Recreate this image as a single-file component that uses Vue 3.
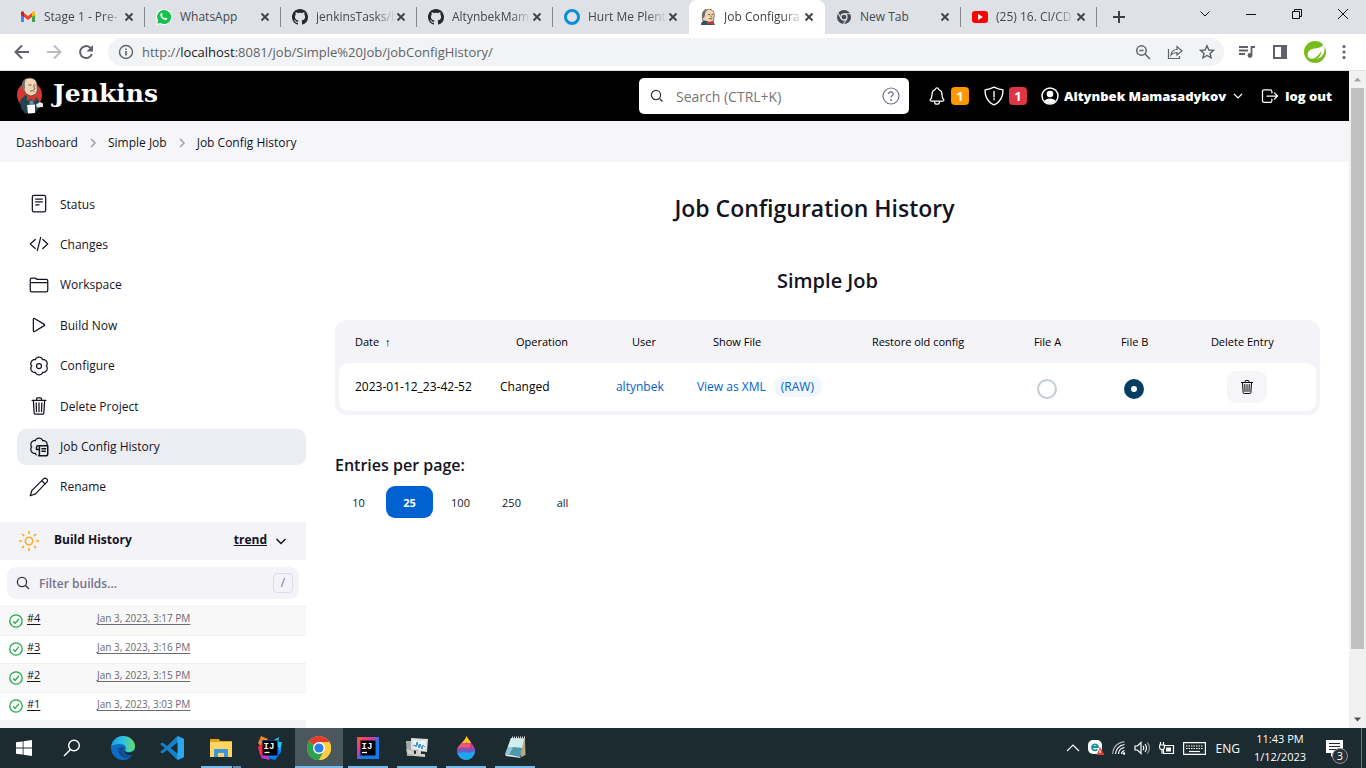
<script setup>
import { ref } from 'vue'

const tabs = [
  { icon: 'gmail', title: 'Stage 1 - Pre-' },
  { icon: 'whatsapp', title: 'WhatsApp' },
  { icon: 'github', title: 'jenkinsTasks/b' },
  { icon: 'github', title: 'AltynbekMam' },
  { icon: 'ring', title: 'Hurt Me Plent' },
  { icon: 'jenkins', title: 'Job Configura', active: true },
  { icon: 'chrome', title: 'New Tab' },
  { icon: 'youtube', title: '(25) 16. CI/CD' },
]

const menu = [
  { icon: 'status', label: 'Status' },
  { icon: 'code', label: 'Changes' },
  { icon: 'folder', label: 'Workspace' },
  { icon: 'play', label: 'Build Now' },
  { icon: 'gear', label: 'Configure' },
  { icon: 'trash', label: 'Delete Project' },
  { icon: 'history', label: 'Job Config History', active: true },
  { icon: 'pencil', label: 'Rename' },
]

const builds = [
  { id: '#4', date: 'Jan 3, 2023, 3:17 PM' },
  { id: '#3', date: 'Jan 3, 2023, 3:16 PM' },
  { id: '#2', date: 'Jan 3, 2023, 3:15 PM' },
  { id: '#1', date: 'Jan 3, 2023, 3:03 PM' },
]

const pageSizes = ['10', '25', '100', '250', 'all']
const pageSize = ref('25')

// Closed curve with six soft lobes, used for the settings glyph.
function lobes(from, to, close) {
  const points = []
  for (let a = from; a <= to; a += 5) {
    const t = (a * Math.PI) / 180
    const r = 8.7 + 1.9 * Math.pow(Math.abs(Math.cos(3 * t)), 0.7)
    points.push(`${(12 + r * Math.sin(t)).toFixed(2)} ${(12 - r * Math.cos(t)).toFixed(2)}`)
  }
  return 'M' + points.join('L') + (close ? 'Z' : '')
}
const gear = lobes(0, 355, true)
const gearOpen = lobes(200, 435, false)
const rays = [0, 45, 90, 135, 180, 225, 270, 315]
</script>

<template>
  <div class="screen">
    <header class="tabstrip">
      <div v-for="(t, i) in tabs" :key="i" class="tab" :class="{ active: t.active, plain: i === 4 }">
        <svg v-if="t.icon === 'gmail'" class="fav" viewBox="0 0 16 16"><path d="M1 4v9h3V7z" fill="#4285f4"/><path d="M15 4v9h-3V7z" fill="#34a853"/><path d="M4 4l4 3 4-3v4l-4 3-4-3z" fill="#ea4335"/><path d="M1 4c0-2 2-2 3-1v5L1 6z" fill="#c5221f"/><path d="M15 4c0-2-2-2-3-1v5l3-2z" fill="#fbbc04"/></svg>
        <svg v-else-if="t.icon === 'whatsapp'" class="fav" viewBox="0 0 16 16"><path d="M8 0a8 8 0 00-7 12L0 16l4-1A8 8 0 108 0z" fill="#fff"/><path d="M8 1a7 7 0 00-6 10.500L1.300 14.700l3.200-.8A7 7 0 108 1z" fill="#12c24a"/><path d="M5 4.200c.6-.4 1-.2 1.200.3l.5 1.200c0 .4-.5.7-.7 1 .6 1.200 1.500 2 2.800 2.500.4-.3.700-.9 1.100-.8l1.500.8c.2 1.200-.9 1.800-1.800 1.700-2.700-.3-5.200-2.800-5.300-5 0-.7.300-1.300.7-1.700z" fill="#fff"/></svg>
        <svg v-else-if="t.icon === 'github'" class="fav" viewBox="0 0 16 16"><path fill="#24292f" d="M8 0C3.580 0 0 3.580 0 8c0 3.540 2.290 6.530 5.470 7.590.4.070.55-.17.55-.38 0-.19-.01-.82-.01-1.490-2.010.37-2.530-.49-2.690-.94-.09-.23-.48-.94-.82-1.130-.28-.15-.68-.52-.01-.53.63-.01 1.080.58 1.230.82.72 1.210 1.870.87 2.330.66.07-.52.28-.87.51-1.070-1.780-.2-3.640-.89-3.640-3.950 0-.87.31-1.590.82-2.150-.08-.2-.36-1.020.08-2.120 0 0 .67-.21 2.200.82.64-.18 1.320-.27 2-.27.68 0 1.360.09 2 .27 1.530-1.040 2.200-.82 2.200-.82.44 1.100.16 1.920.08 2.120.51.56.82 1.270.82 2.150 0 3.070-1.870 3.750-3.650 3.950.29.25.54.73.54 1.480 0 1.070-.01 1.930-.01 2.200 0 .21.15.46.55.38A8.013 8.013 0 0016 8c0-4.420-3.580-8-8-8z"/></svg>
        <svg v-else-if="t.icon === 'ring'" class="fav" viewBox="0 0 16 16"><circle cx="8" cy="8" r="6.500" fill="none" stroke="#0b8fd3" stroke-width="3"/></svg>
        <svg v-else-if="t.icon === 'jenkins'" class="fav" viewBox="0 0 16 16"><path d="M3 12C1 5 3 0 8 0s7 4 6 8l-1 5-5 1z" fill="#f0d6b7" stroke="#4a3b35" stroke-width=".7"/><path d="M3 9C1 4 4 0 9 .5 6 1 5 3 5 6L4 9z" fill="#6d6b6d"/><path d="M8 5.500h2M11.500 5.500h1.500M9 9.500l3 .5M10.500 6.500l1.500 2" stroke="#4a3b35" stroke-width=".8" fill="none"/><path d="M1 16c0-3 2-4.500 4-4.500l4 1.500 4-1 2 4z" fill="#335061"/><path d="M7 12l3 1.500 3-1.500v4l-3-1.500L7 16z" fill="#d33833"/></svg>
        <svg v-else-if="t.icon === 'chrome'" class="fav" viewBox="0 0 16 16"><circle cx="8" cy="8" r="7" fill="#474b50"/><circle cx="8" cy="8" r="3" fill="#474b50" stroke="#dee1e6" stroke-width="1.300"/><path d="M8 4.700h6.500M5.200 9.700L2 4M10.800 9.700L7.500 15" stroke="#dee1e6" stroke-width="1.100"/></svg>
        <svg v-else class="fav" viewBox="0 0 16 16"><rect y="2" width="16" height="12" rx="3" fill="#f00"/><path d="M6 5v6l5-3z" fill="#fff"/></svg>
        <span class="tab-title" :class="{ faded: t.title.length > 8 }">{{ t.title }}</span>
        <button class="tab-close" :aria-label="'Close ' + t.title"><svg width="10" height="10" viewBox="0 0 10 10"><path d="M1.500 1.500l7 7M8.500 1.500l-7 7" stroke="#3c4043" stroke-width="1.800"/></svg></button>
      </div>
      <button class="newtab" aria-label="New tab"><svg width="14" height="14" viewBox="0 0 14 14"><path d="M7 1v12M1 7h12" stroke="#3c4043" stroke-width="2"/></svg></button>
      <div class="wincontrols">
        <button aria-label="Search tabs"><svg viewBox="0 0 12 12"><path d="M1.500 3.500L6 8l4.500-4.500"/></svg></button>
        <button aria-label="Minimize"><svg viewBox="0 0 12 12"><path d="M1 6.500h10"/></svg></button>
        <button aria-label="Restore"><svg viewBox="0 0 12 12"><path d="M1.500 3.500h7v7h-7zM3.500 3.500v-2h7v7h-2"/></svg></button>
        <button aria-label="Close window"><svg viewBox="0 0 12 12"><path d="M1 1l10 10M11 1L1 11"/></svg></button>
      </div>
    </header>

    <div class="toolbar">
      <button class="tool" aria-label="Back"><svg width="16" height="16" viewBox="0 0 16 16"><path d="M15 8H2M8 1.500L1.500 8 8 14.500" fill="none" stroke="#5f6368" stroke-width="2"/></svg></button>
      <button class="tool" aria-label="Forward"><svg width="16" height="16" viewBox="0 0 16 16"><path d="M1 8h13M8 1.500L14.500 8 8 14.500" fill="none" stroke="#babcbe" stroke-width="2"/></svg></button>
      <button class="tool" aria-label="Reload"><svg width="16" height="16" viewBox="0 0 16 16"><path d="M13.800 10A6 6 0 1112 3.500L14 5.500" fill="none" stroke="#5f6368" stroke-width="2"/><path d="M15 1v6.500H8.500z" fill="#5f6368"/></svg></button>
      <div class="omnibox">
        <svg width="16" height="16" viewBox="0 0 16 16"><circle cx="8" cy="8" r="6.500" fill="none" stroke="#5f6368" stroke-width="1.400"/><path d="M8 7v4.500M8 4.500V6" stroke="#5f6368" stroke-width="1.600"/></svg>
        <a class="url" href="#">http://<b>localhost</b>:8081/job/Simple%20Job/jobConfigHistory/</a>
        <button class="tool" aria-label="Zoom"><svg width="16" height="16" viewBox="0 0 16 16" fill="none" stroke="#5f6368" stroke-width="1.500"><circle cx="6.500" cy="6.500" r="4.700"/><path d="M10 10l5 5M4.500 6.500h4"/></svg></button>
        <button class="tool" aria-label="Share"><svg width="16" height="16" viewBox="0 0 16 16" fill="none" stroke="#5f6368" stroke-width="1.200"><path d="M1.500 5v9.500h11V12M4 11c.5-4 3-5.500 6-5.500V2.500l5 4.500-5 4V8.500c-3 0-4.500.5-6 2.500z"/></svg></button>
        <button class="tool" aria-label="Bookmark"><svg width="16" height="16" viewBox="0 0 16 16"><path d="M8 1.800l1.900 4.200 4.600.4-3.500 3 1.100 4.500L8 11.500l-4.100 2.400L5 9.400l-3.500-3L6.100 6z" fill="none" stroke="#5f6368" stroke-width="1.400"/></svg></button>
      </div>
      <button class="tool" aria-label="Media"><svg width="18" height="16" viewBox="0 0 18 16"><path d="M1 3h9M1 6.500h9M1 10h6M13.500 11V3H17" fill="none" stroke="#5f6368" stroke-width="1.800"/><circle cx="12" cy="11.500" r="2.400" fill="#5f6368"/></svg></button>
      <button class="tool" aria-label="Side panel"><svg width="16" height="16" viewBox="0 0 16 16"><path d="M2 2h12v12H2z" fill="none" stroke="#5f6368" stroke-width="2"/><path d="M9 1h6v14H9z" fill="#5f6368"/></svg></button>
      <button class="tool" aria-label="Profile"><svg width="22" height="22" viewBox="0 0 22 22"><circle cx="11" cy="11" r="11" fill="#77bc1f"/><path d="M20 3c1.500 6 .5 13-6.500 14.500-4 .8-7.500.5-9.500-1.500C2.500 11 6 8 11 7.500c4-.4 7-1.500 9-4.500z" fill="#fff"/><path d="M3 18.500c6 .5 11.500-3 14.500-9 0 5-4 9.500-10 9.500z" fill="#77bc1f"/></svg></button>
      <button class="tool" aria-label="Menu"><svg width="4" height="16" viewBox="0 0 4 16" fill="#5f6368"><circle cx="2" cy="2.500" r="1.600"/><circle cx="2" cy="8" r="1.600"/><circle cx="2" cy="13.500" r="1.600"/></svg></button>
    </div>

    <div class="viewport">
      <div class="page">
        <div class="topbar">
          <a class="brand" href="#">
            <svg width="28" height="38" viewBox="0 0 28 38"><ellipse cx="13.500" cy="18" rx="12.500" ry="13" fill="#d33833"/><path d="M4 24l5-6 6 3 5-1 3 4 1 6-5 6-10 .5-4-5.500z" fill="#24424f"/><path d="M7 11C5 4 9 1 14 1s7.500 4 7 8c.8 3.500.5 6.500-2 8.500l-4 1.500-5-2z" fill="#f0d6b7" stroke="#3b2c26" stroke-width=".6"/><path d="M7 13C5 9 5.500 4 10 1.800 8.500 4.500 8.800 8 9 11l-1 3z" fill="#77726f"/><path d="M12.500 8h3M17.500 8h2M14 14.500c1.500-1 3-1 4.500 0M17.500 9l1.500 3-1.500.5" stroke="#49372e" stroke-width=".8" fill="none"/><path d="M11 18.500l4 2 4.500-2v5.500l-4.500-2-4 2z" fill="#d33833"/><path d="M13.500 23.500h4v4h-4z" fill="#6f8f9e"/><path d="M11 28l8-.5v8.500l-7 .5z" fill="#fff"/><path d="M20 27.500l4-2.500 3 1.500v3.500l-6 .5z" fill="#e9e6e2"/></svg>
            <span>Jenkins</span>
          </a>
          <div class="searchbox">
            <svg width="14" height="14" viewBox="0 0 14 14"><circle cx="6" cy="6" r="4.600" fill="none" stroke="#333" stroke-width="1.200"/><path d="M9.500 9.500L12.500 12.500" stroke="#333" stroke-width="1.300"/></svg>
            <input type="text" placeholder="Search (CTRL+K)" aria-label="Search" />
            <a href="#" aria-label="Search help"><svg width="18" height="18" viewBox="0 0 18 18"><circle cx="9" cy="9" r="8" fill="none" stroke="#73738c" stroke-width="1.200"/><path d="M6.500 7c.2-3 5-2.800 4.700 0-.2 1.500-2.200 1.500-2.200 3.500" fill="none" stroke="#73738c" stroke-width="1.300"/><circle cx="9" cy="13" r="1" fill="#73738c"/></svg></a>
          </div>
          <a class="notice" href="#" aria-label="Notifications"><svg width="20" height="20" viewBox="0 0 512 512"><path class="line" d="M427.680 351.430C402 320 383.870 304 383.870 217.350 383.870 138 343.350 109.730 310 96c-4.430-1.820-8.600-6-9.950-10.550C294.200 65.540 277.800 48 256 48s-38.210 17.550-44 37.470c-1.350 4.600-5.520 8.710-9.950 10.530-33.390 13.750-73.870 41.920-73.870 121.350C128.130 304 110 320 84.320 351.430 73.680 364.450 83 384 101.610 384h308.880c18.510 0 27.770-19.610 17.190-32.570zM320 384v16a64 64 0 01-128 0v-16"/></svg><span class="badge orange">1</span></a>
          <a class="notice" href="#" aria-label="Security warnings"><svg width="22" height="22" viewBox="0 0 512 512"><path class="line" d="M463.100 112.370C373.680 96.330 336.710 84.450 256 48c-80.710 36.450-117.680 48.330-207.100 64.370C32.700 369.130 240.580 457.790 256 464c15.420-6.210 223.300-94.870 207.100-351.630zM256 150v130M256 320v26"/></svg><span class="badge red">1</span></a>
          <a class="user" href="#"><svg width="18" height="18" viewBox="0 0 18 18"><circle cx="9" cy="9" r="8" fill="none" stroke="#fff" stroke-width="1.500"/><circle cx="9" cy="7" r="3.300" fill="#fff"/><path d="M3.500 14c1-3.500 10-3.500 11 0-2 3-9 3-11 0z" fill="#fff"/></svg><span>Altynbek Mamasadykov</span></a>
          <button class="caret" aria-label="User menu"><svg width="10" height="10" viewBox="0 0 10 10"><path d="M1 3l4 4 4-4" fill="none" stroke="#fff" stroke-width="1.200"/></svg></button>
          <a class="user logout" href="#"><svg width="20" height="20" viewBox="0 0 512 512"><path class="line" d="M304 336v40a40 40 0 01-40 40H104a40 40 0 01-40-40V136a40 40 0 0140-40h152c22.090 0 48 17.910 48 40v40M368 336l80-80-80-80M176 256h256"/></svg><span>log out</span></a>
        </div>

        <nav class="crumbs" aria-label="Breadcrumb">
          <a href="#">Dashboard</a>
          <svg width="8" height="10" viewBox="0 0 8 10"><path d="M2 1l4 4-4 4"/></svg>
          <a href="#">Simple Job</a>
          <svg width="8" height="10" viewBox="0 0 8 10"><path d="M2 1l4 4-4 4"/></svg>
          <a href="#">Job Config History</a>
        </nav>

        <div class="body">
          <aside class="side">
            <nav class="tasks" aria-label="Job">
              <a v-for="m in menu" :key="m.label" href="#" :class="{ current: m.active }">
                <svg v-if="m.icon === 'status'" viewBox="0 0 24 24"><rect x="4" y="1.500" width="16" height="20" rx="2"/><path d="M8 6h8M8 9.500h8M8 13h4"/></svg>
                <svg v-else-if="m.icon === 'code'" viewBox="0 0 24 24"><path d="M7.500 6.500L1.500 12l6 5.500M16.500 6.500l6 5.500-6 5.500M14 4l-4 16"/></svg>
                <svg v-else-if="m.icon === 'folder'" viewBox="0 0 512 512"><path class="line" d="M440 432H72a40 40 0 01-40-40V120a40 40 0 0140-40h75.890a40 40 0 0122.190 6.720l27.840 18.560a40 40 0 0022.190 6.720H440a40 40 0 0140 40v240a40 40 0 01-40 40zM32 192h448"/></svg>
                <svg v-else-if="m.icon === 'play'" viewBox="0 0 512 512"><path class="line" d="M112 111v290c0 17.440 17 28.520 31 20.160l247.900-148.370c12.120-7.250 12.120-26.330 0-33.580L143 90.840c-14-8.360-31 2.720-31 20.160z"/></svg>
                <svg v-else-if="m.icon === 'gear'" viewBox="0 0 24 24"><path :d="gear"/><circle cx="12" cy="12" r="3"/></svg>
                <svg v-else-if="m.icon === 'trash'" viewBox="0 0 512 512"><path class="line" d="M112 112l20 320c.95 18.490 14.400 32 32 32h184c17.670 0 30.870-13.510 32-32l20-320M80 112h352M192 112V72a24 24 0 0124-24h80a24 24 0 0124 24v40M256 176v224M184 176l8 224M328 176l-8 224"/></svg>
                <svg v-else-if="m.icon === 'history'" viewBox="0 0 24 24"><path :d="gearOpen"/><path d="M11.500 22.500H20a2.500 2.500 0 002.500-2.500v-9.500H11a2 2 0 00-2 2v2.500h3.500v5.500a2 2 0 01-1 2M12.500 11v4M15.500 14h4.500M15.500 17h4" stroke-width="1.800"/></svg>
                <svg v-else viewBox="0 0 24 24"><path d="M1.500 22.500l2-6.500L17.500 2.300a2.500 2.500 0 013.800 0 2.500 2.500 0 010 3.900L7.800 20.200zM15.500 4.500l4 4"/></svg>
                <span>{{ m.label }}</span>
              </a>
            </nav>

            <section class="history">
              <div class="history-head">
                <svg width="20" height="20" viewBox="0 0 20 20" fill="none" stroke="#fbab2a" stroke-width="1.600"><circle cx="10" cy="10" r="3.700"/><path v-for="r in rays" :key="r" d="M10 0v3" :transform="`rotate(${r} 10 10)`"/></svg>
                <h2>Build History</h2>
                <a href="#">trend</a>
                <button aria-label="Collapse build history"><svg width="12" height="12" viewBox="0 0 12 12"><path d="M1.500 4L6 8.500 10.500 4" fill="none" stroke="#14141f" stroke-width="1.500"/></svg></button>
              </div>
              <div class="filter">
                <svg width="14" height="14" viewBox="0 0 14 14"><circle cx="6" cy="6" r="4.600" fill="none" stroke="#333" stroke-width="1.300"/><path d="M9.500 9.500L13 13" stroke="#333" stroke-width="1.300"/></svg>
                <input type="text" placeholder="Filter builds..." aria-label="Filter builds" />
                <kbd>/</kbd>
              </div>
              <ul class="builds">
                <li v-for="b in builds" :key="b.id">
                  <svg width="14" height="14" viewBox="0 0 14 14" fill="none" stroke="#1ea64b" stroke-width="1.300"><circle cx="7" cy="7" r="6.200"/><path d="M4.200 7.500l2 1.800 3.600-4.500"/></svg>
                  <a class="num" href="#">{{ b.id }}</a>
                  <a class="when" href="#">{{ b.date }}</a>
                </li>
              </ul>
            </section>
          </aside>

          <main class="main">
            <h1>Job Configuration History</h1>
            <h2 class="job">Simple Job</h2>
            <div class="tablewrap">
              <table>
                <colgroup><col class="c1" /><col class="c2" /><col class="c3" /><col class="c4" /><col class="c5" /><col class="c6" /><col class="c7" /><col class="c8" /></colgroup>
                <thead>
                  <tr><th>Date&nbsp; ↑</th><th>Operation</th><th>User</th><th>Show File</th><th>Restore old config</th><th>File A</th><th>File B</th><th>Delete Entry</th></tr>
                </thead>
                <tbody>
                  <tr>
                    <td>2023-01-12_23-42-52</td>
                    <td>Changed</td>
                    <td><a href="#">altynbek</a></td>
                    <td><a href="#">View as XML</a><a class="raw" href="#">(RAW)</a></td>
                    <td></td>
                    <td class="pick"><input type="radio" name="fileA" aria-label="File A" /></td>
                    <td class="pick"><input type="radio" name="fileB" aria-label="File B" checked /></td>
                    <td class="mid"><button class="del" aria-label="Delete entry"><svg width="16" height="16" viewBox="0 0 512 512"><path class="line" d="M112 112l20 320c.95 18.490 14.400 32 32 32h184c17.670 0 30.870-13.510 32-32l20-320M80 112h352M192 112V72a24 24 0 0124-24h80a24 24 0 0124 24v40M256 176v224M184 176l8 224M328 176l-8 224"/></svg></button></td>
                  </tr>
                </tbody>
              </table>
            </div>
            <h3>Entries per page:</h3>
            <div class="sizes">
              <button v-for="s in pageSizes" :key="s" :class="{ on: s === pageSize }" @click="pageSize = s">{{ s }}</button>
            </div>
          </main>
        </div>
      </div>
      <div class="scrollbar">
        <svg width="17" height="17" viewBox="0 0 17 17"><path d="M5 10.500l3.500-4 3.500 4z" fill="#a3a3a3"/></svg>
        <div class="track"><div class="thumb"></div></div>
        <svg width="17" height="17" viewBox="0 0 17 17"><path d="M5 6.500l3.500 4 3.500-4z" fill="#505050"/></svg>
      </div>
    </div>

    <footer class="taskbar">
      <button class="app first" aria-label="Start"><svg width="16" height="16" viewBox="0 0 16 16" fill="#fff"><path d="M0 2.300L6.700 1.400v6.200H0zM7.500 1.300L16 0v7.600H7.500zM0 8.400h6.700v6.200L0 13.700zM7.500 8.400H16V16l-8.500-1.300z"/></svg></button>
      <button class="app second" aria-label="Search"><svg width="18" height="18" viewBox="0 0 18 18" fill="none" stroke="#fff" stroke-width="1.400"><circle cx="11" cy="6.500" r="5.300"/><path d="M7.500 10.500L1 17"/></svg></button>
      <button class="app" aria-label="Edge"><svg width="24" height="24" viewBox="0 0 24 24"><defs><linearGradient id="eg" x1="0" x2="1"><stop offset="0" stop-color="#199de3"/><stop offset=".55" stop-color="#32c5dc"/><stop offset="1" stop-color="#6bdc5a"/></linearGradient></defs><circle cx="12" cy="12" r="12" fill="#0b6cc4"/><path d="M.2 11C1 4 6 0 12 0c7 0 12 5 12 10 0 4-3 6-6.500 6-3 0-3.800-1.200-3-2.500 1.500-2-.5-5.500-5-5.500C5 8 1 9 .2 11z" fill="url(#eg)"/><path d="M7.500 13c-1 6 4 9 8 9 3 0 5.500-1.500 7-3.500-4 2-8 1-9.500-1.500-1.500-2-.5-4 .5-4.500-1-2-5-2-6 .5z" fill="#124c8d"/><path d="M14.500 14c-1 1.500.5 2.500 3 2.500 3 0 6-1.500 6.500-4.500 0 4-1 6.500-2 7-4 1-7.500-.5-8.500-2.500-.5-1 0-2 1-2.500z" fill="#1b2b32"/></svg></button>
      <button class="app" aria-label="Code"><svg width="24" height="24" viewBox="0 0 24 24"><path d="M17.500 0L24 3v18l-6.500 3L7 14l-4.500 3.500L0 16l5-4-5-4 2.500-1.500L7 10z" fill="#1583cc"/><path d="M17.500 0L24 3v18l-6.500 3z" fill="#2ba7f0"/><path d="M17.500 6.500v11L10.500 12z" fill="#1b2b32"/></svg></button>
      <button class="app open wide" aria-label="Files"><svg width="22" height="20" viewBox="0 0 22 20"><path d="M0 1h9l1 2h12v16H0z" fill="#e8a20c"/><path d="M0 4h22v15H0z" fill="#ffd563"/><path d="M4 11h14v8h-4v-4H8v4H4z" fill="#3d95dd"/></svg></button>
      <button class="app" aria-label="IntelliJ IDEA"><svg width="24" height="24" viewBox="0 0 24 24"><path d="M3 0l7 3-5 10-5-6z" fill="#fc801d"/><path d="M4 4l16 0 3 4v8l-6 8-8-2-6-6z" fill="#087cfa"/><path d="M0 11l6-5 5 18-9-5z" fill="#fe2857"/><path d="M16 4l5-3-1 5 4 0-2 9-4-9z" fill="#21c7f4"/><path d="M4 16l8 8-9-2z" fill="#d731ce"/><rect x="4.500" y="4.500" width="15" height="15"/><text x="5.500" y="12.500" class="ij">IJ</text><path d="M6.500 16.500h5" stroke="#fff" stroke-width="1.300"/></svg></button>
      <button class="app open current" aria-label="Chrome"><svg width="24" height="24" viewBox="0 0 24 24"><circle cx="12" cy="12" r="12" fill="#ffcd40"/><path d="M12 12L1.600 6a12 12 0 0120.800 0z" fill="#e33b2e"/><path d="M12 12l-10.400-6A12 12 0 0012 24l5.200-9z" fill="#2ba24c"/><path d="M12 6h10.400A12 12 0 0112 24l5.200-9z" fill="#ffcd40"/><circle cx="12" cy="12" r="6" fill="#fff"/><circle cx="12" cy="12" r="4.600" fill="#2f7be8"/></svg></button>
      <button class="app open" aria-label="IntelliJ"><svg width="22" height="22" viewBox="0 0 22 22"><defs><linearGradient id="ig" x1="0" y1="0" x2="1" y2="1"><stop offset="0" stop-color="#fc5a1d"/><stop offset=".35" stop-color="#d43aa5"/><stop offset=".6" stop-color="#1677ed"/></linearGradient></defs><rect width="22" height="22" fill="url(#ig)"/><rect x="3.500" y="3.500" width="15" height="15"/><text x="4.500" y="11.500" class="ij">IJ</text><path d="M5 15.500h5" stroke="#fff" stroke-width="1.300"/></svg></button>
      <button class="app open" aria-label="Monitor"><svg width="24" height="22" viewBox="0 0 24 22"><path d="M1 4h8v15H2z" fill="#aaa"/><path d="M6 1l17 1-1 13-16-2z" fill="#ddd"/><path d="M8 3l13 1-1 9-12-2z" fill="#eef5fa"/><path d="M8 9l2-1 1 2 1-5 2 6 1-4 2 5 1-4 2 2" fill="none" stroke="#2b85c4"/><path d="M11 14h5v3h4v3l-11-1v-2h2zM1 12l7 2 2 4-7-1z" fill="#cfcfcf"/></svg></button>
      <button class="app open" aria-label="Paint"><svg width="18" height="24" viewBox="0 0 18 24"><defs><clipPath id="drop"><path d="M9.500 0c2 5 8.500 9 8.500 15a9 9 0 01-18 0C0 9 8 6 9.500 0z"/></clipPath></defs><g clip-path="url(#drop)"><path d="M0 0h18v24H0z" fill="#cb3a8b"/><path d="M5 0h9v7c-3 0-4-1-9 1z" fill="#fcc81a"/><path d="M0 8c6-3 8 1 13-1v4c-5 2-8-1-13 2z" fill="#f0567c"/><path d="M0 14c7-4 10 1 18-2v4c-7 3-11-1-18 3z" fill="#6c5cc8"/><path d="M0 18c7-4 11 1 18-3v9H0z" fill="#18a8f0"/></g></svg></button>
      <button class="app open" aria-label="Notepad"><svg width="24" height="24" viewBox="0 0 24 24"><path d="M9 2h13l.5 17-4 2z" fill="#b9a781"/><path d="M8 2l13 1-4 18-15-3z" fill="#8fc5d2"/><path d="M8 2l13 1-2 9-14-1z" fill="#cfeef0"/><path d="M10 11l9 1-2 9-11-2z" fill="#4e98a8"/><path d="M2 18l15 3 1 1-15-2z" fill="#eee"/><path d="M9 1.500h13" stroke="#ddd" stroke-dasharray="1 1" stroke-width="2"/></svg></button>
      <div class="tray">
        <svg width="14" height="14" viewBox="0 0 14 14"><path d="M1 10l6-6 6 6"/></svg>
        <svg width="16" height="16" viewBox="0 0 16 16"><rect x="0" y="0" width="14" height="14" rx="5" fill="#fff" stroke="none"/><path d="M3.500 7h6.500a3 3 0 10-.8 2.400" stroke="#0f9199" stroke-width="1.800"/><path d="M12 7l4.500 8h-8z" fill="#e33b3b" stroke="none"/><path d="M12 10v3"/></svg>
        <svg width="14" height="14" viewBox="0 0 14 14"><path d="M9.500 13a4 4 0 013-3.500M6.500 13a7 7 0 016-6.500M3.500 13a10 10 0 019-9.500" /><path d="M.8 13A12 12 0 0112.500.8" stroke="#aab2b5"/><circle cx="12" cy="12.500" r="1.200" fill="#fff" stroke="none"/></svg>
        <svg width="17" height="14" viewBox="0 0 17 14"><path d="M1 5h2.500L7 1.500v11L3.500 9H1zM9 5c1 1 1 3 0 4M11 3.200c2 2 2 5.600 0 7.600"/><path d="M13.200 1.500c3 3 3 8 0 11" stroke="#87949a"/></svg>
        <svg width="16" height="14" viewBox="0 0 16 14"><path d="M5 4.500h9.500v8H4.500v-4M1.500 1v3M4.500 1v3M.5 4h5v2a2 2 0 01-5 0zM3 8v4.500"/><path d="M7 6.500h5v4H7z" fill="#fff" stroke="none"/></svg>
        <svg width="23" height="13" viewBox="0 0 23 13"><path d="M.6.6h21.800v11.800H.6z"/><path d="M3 4h17M3 6.500h17" stroke-dasharray="1.500 1"/><path d="M6 9.500h11"/></svg>
        <span class="lang">ENG</span>
        <div class="clock"><span>11:43 PM</span><span>1/12/2023</span></div>
        <button class="action" aria-label="Notifications"><svg width="18" height="17" viewBox="0 0 18 17"><path d="M0 0h17v13H9l-4 4v-4H0z" fill="#fff" stroke="none"/><path d="M3 3.500h11M3 6.500h11M3 9.500h7" stroke="#1b2b32"/></svg><span>3</span></button>
      </div>
    </footer>
  </div>
</template>

<style>
body { margin: 0; }
</style>

<style scoped>
* { box-sizing: border-box; }
.screen { min-height: 100vh; display: flex; flex-direction: column; font-family: "Segoe UI", "Open Sans", "Noto Sans", sans-serif; font-size: 12px; color: #14141f; background: #fff; }
button { border: 0; background: none; padding: 0; margin: 0; font: inherit; color: inherit; display: flex; align-items: center; justify-content: center; }
a { color: inherit; text-decoration: none; }
svg { flex: none; display: block; }
h1, h2, h3, ul { margin: 0; padding: 0; }
.line { fill: none; stroke: currentColor; stroke-width: 32; stroke-linecap: round; stroke-linejoin: round; }

.tabstrip { height: 34px; display: flex; background: #dee1e6; padding-left: 9px; }
.tab { flex: 0 1 136px; min-width: 0; display: flex; align-items: center; padding: 0 10px 0 11px; position: relative; color: #45494d; }
.tab::after { content: ""; position: absolute; right: 0; top: 7px; width: 1px; height: 20px; background: #85888c; }
.tab.active::after, .tab.plain::after { display: none; }
.tab.active { background: #fff; border-radius: 8px 8px 0 0; color: #3c4043; }
.fav { width: 16px; height: 16px; }
.tab-title { flex: 1; min-width: 0; margin-left: 8px; white-space: nowrap; line-height: 18px; }
.tab-title.faded { mask-image: linear-gradient(to right, #000 75%, transparent 100%); }
.tab-close { width: 12px; height: 16px; flex: none; }
.newtab { width: 28px; margin-left: 8px; }
.wincontrols { margin-left: auto; display: flex; height: 28px; }
.wincontrols button { width: 46px; }
.wincontrols svg { width: 12px; height: 12px; fill: none; stroke: #111; stroke-width: 1; }

.toolbar { height: 37px; display: flex; align-items: center; gap: 16px; padding: 0 20px 0 14px; border-bottom: 1px solid #dfe1e5; }
.toolbar .tool { min-width: 4px; flex: none; }
.omnibox { flex: 1; height: 28px; margin: 0 -2px; border-radius: 14px; background: #f1f3f4; display: flex; align-items: center; gap: 16px; padding: 0 9px 0 10px; }
.url { flex: 1; font-size: 13px; line-height: 20px; color: #5f6368; margin-left: -8px; white-space: nowrap; overflow: hidden; }
.url b { font-weight: 400; color: #202124; }

.viewport { flex: 1; display: flex; }
.page { flex: 1; min-width: 0; display: flex; flex-direction: column; }
.topbar { height: 50px; background: #000; color: #fff; display: flex; align-items: center; padding: 0 17px 0 16px; }
.brand { display: flex; align-items: center; gap: 9px; margin-right: auto; font: bold 25px/32px "DejaVu Serif", serif; }
.brand span { padding-bottom: 4px; }
.searchbox { width: 270px; height: 36px; border-radius: 5px; background: #fff; display: flex; align-items: center; padding: 0 9px 0 11px; gap: 12px; margin-right: 18px; }
input[type="text"] { border: 0; background: none; padding: 0; flex: 1; min-width: 0; font: inherit; outline: none; }
.searchbox input { font-size: 14px; }
.searchbox input::placeholder { color: #757575; opacity: 1; }
.notice { display: flex; align-items: center; gap: 4px; margin-right: 14px; }
.badge { width: 18px; height: 18px; border-radius: 4px; font-weight: 700; font-size: 13px; line-height: 18px; text-align: center; }
.orange { background: #ff9800; }
.red { background: #dc3545; }
.user { display: flex; align-items: center; gap: 5px; font-size: 13px; font-weight: 800; white-space: nowrap; }
.user.logout { gap: 5px; }
.caret { width: 16px; margin: 0 14px 0 4px; }

.crumbs { height: 41px; background: #f6f6f9; display: flex; align-items: center; gap: 11px; padding: 2px 16px 0; }
.crumbs svg { fill: none; stroke: #a0a0b0; stroke-width: 1.500; }
.body { flex: 1; display: flex; }
.side { width: 306px; flex: none; display: flex; flex-direction: column; padding-top: 24px; }
.tasks { min-height: 319px; display: flex; flex-direction: column; justify-content: space-between; padding-left: 17px; }
.tasks a { height: 36px; border-radius: 9px; display: flex; align-items: center; gap: 11px; padding-left: 12px; }
.tasks a.current { background: #ecedf2; }
.tasks svg { width: 20px; height: 20px; fill: none; stroke: currentColor; stroke-width: 1.500; stroke-linejoin: round; stroke-linecap: round; }
.history { flex: 1; margin-top: 17px; display: flex; flex-direction: column; border-bottom: 8px solid #f3f3f8; }
.history-head { height: 38px; background: #f3f3f8; display: flex; align-items: center; padding: 0 19px; }
.history-head h2, .history-head a { font-size: 12px; font-weight: 700; line-height: 18px; padding-bottom: 2px; }
.history-head h2 { margin: 0 auto 0 15px; }
.history-head a { text-decoration: underline; margin-right: 8px; }
.filter { margin: 7px 7px; height: 32px; border-radius: 9px; background: #f3f3f8; display: flex; align-items: center; padding: 0 6px 0 9px; gap: 9px; color: #73738c; }
.filter input { font-weight: 600; }
.filter input::placeholder { color: #73738c; opacity: 1; }
kbd { width: 20px; height: 20px; border: 1px solid #dcdce8; border-radius: 4px; font: inherit; line-height: 18px; text-align: center; }
.builds { flex: 1; list-style: none; display: grid; grid-auto-rows: 1fr; font-size: 10px; }
.builds li { display: flex; align-items: center; border-top: 1px solid #f0f0f0; padding: 0 9px; }
.builds li:nth-child(odd) { background: #f8f8f8; }
.builds a { text-decoration: underline; text-underline-offset: 2px; line-height: 14px; padding-bottom: 5px; }
.num { width: 70px; margin-left: 4px; font-size: 11px; }
.when { color: #6b6b75; }

.main { flex: 1; min-width: 0; padding: 29px 29px 0; }
h1 { text-align: center; font-size: 23px; line-height: 34px; font-weight: 600; padding-right: 26px; }
.job { text-align: center; font-size: 20px; line-height: 28px; font-weight: 600; margin-top: 42px; }
.tablewrap { margin-top: 25px; border: 4px solid #f3f3f8; border-top: 0; border-radius: 12px; background: #f3f3f8; }
table { width: 100%; border-collapse: separate; border-spacing: 0; table-layout: fixed; color: #000; }
.c1 { width: 14.840%; } .c2 { width: 11.870%; } .c3 { width: 8.290%; } .c4 { width: 16.270%; }
.c5 { width: 16.580%; } .c6 { width: 8.910%; } .c7 { width: 9.210%; } .c8 { width: 14.030%; }
th { height: 43px; padding: 0 0 0 32px; text-align: left; font-weight: 400; font-size: 11px; white-space: nowrap; }
th:first-child { padding-left: 16px; }
td { height: 48px; padding: 0 0 2px 16px; background: #fff; white-space: nowrap; }
td:first-child { border-radius: 9px 0 0 9px; }
td:last-child { border-radius: 0 9px 9px 0; }
td a { color: #0062d1; }
.raw { background: #f1f7fc; border-radius: 10px; padding: 2px 8px; margin-left: 7px; }
td.mid { padding: 0; text-align: center; }
td.pick { padding: 0 0 0 35px; }
.del { width: 40px; height: 32px; border-radius: 9px; background: #f6f6f9; margin: 0 auto; }
input[type="radio"] { appearance: none; display: block; width: 20px; height: 20px; margin: 4px 0 0; border-radius: 50%; border: 2px solid #c3ccd1; background: #fff; }
input[type="radio"]:checked { border: 7px solid #063e63; }
h3 { font-size: 16px; line-height: 24px; font-weight: 600; margin-top: 38px; }
.sizes { display: flex; gap: 4px; margin-top: 9px; font-size: 11px; }
.sizes button { width: 47px; height: 32px; border-radius: 9px; }
.sizes .on { background: #0062d1; color: #fff; font-weight: 700; }

.scrollbar { width: 17px; background: #f1f1f1; display: flex; flex-direction: column; }
.track { flex: 1; display: flex; justify-content: center; }
.thumb { width: 13px; height: 90%; background: #c1c1c1; }

.taskbar { height: 40px; background: #1b2b30; display: flex; color: #fff; }
.app { width: 48px; margin-right: 1px; position: relative; }
.app.first { margin: 0; }
.app.second { margin-right: 3px; }
.app.current { background: #4a575c; }
.app.open::after { content: ""; position: absolute; left: 4px; right: 4px; bottom: 0; height: 2px; background: #76b9ed; }
.app.wide::after { background: linear-gradient(to right, #76b9ed 31px, #1b2b30 31px, #1b2b30 32px, #5b8cb2 32px); }
.app.current::after { left: 0; right: 0; }
.ij { font: bold 9px "Liberation Mono", monospace; fill: #fff; }
.tray { margin-left: auto; display: flex; align-items: center; gap: 8px; padding-right: 4px; }
.tray svg { fill: none; stroke: #fff; stroke-width: 1.200; }
.lang { margin-left: 2px; }
.clock { width: 64px; display: flex; flex-direction: column; align-items: center; line-height: 18px; font-size: 11px; }
.action { width: 38px; height: 40px; border-right: 1px solid #6d777b; position: relative; padding-right: 16px; margin-left: 4px; }
.action span { position: absolute; right: 13px; bottom: 4px; width: 16px; height: 16px; border-radius: 50%; border: 1px solid #8c9396; background: #2b3235; font-size: 11px; line-height: 14px; text-align: center; }
</style>
